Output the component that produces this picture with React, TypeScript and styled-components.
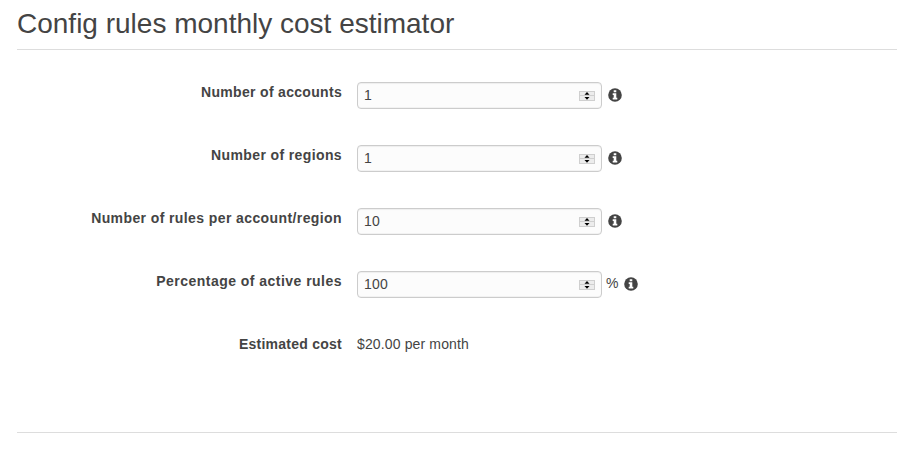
import React from "react";
import styled, { createGlobalStyle } from "styled-components";

const GlobalStyle = createGlobalStyle`
  body { margin: 0; background: #fff; color: #444; font-family: "Liberation Sans", Arial, sans-serif; font-size: 14px; overflow: hidden; }
`;
const Page = styled.main`
  box-sizing: border-box;
  height: 465px;
  padding-left: 17px;
`;
const Panel = styled.section`
  box-sizing: border-box;
  height: 433px;
  border-bottom: 1px solid #ddd;
`;
const Title = styled.h1`
  box-sizing: border-box;
  height: 50px;
  margin: 0 0 32px;
  padding-top: 7px;
  border-bottom: 1px solid #ddd;
  font-size: 28px;
  line-height: 33px;
  font-weight: 400;
  white-space: nowrap;
`;
const Form = styled.div`
  display: grid;
  grid-auto-rows: 27px;
  row-gap: 36px;
`;
const Row = styled.div`
  display: grid;
  grid-template-columns: 325px auto;
  column-gap: 15px;
`;
const Label = styled.label<{ $tracking: number }>`
  text-align: right;
  font-weight: 700;
  line-height: 20px;
  letter-spacing: ${(p) => p.$tracking}px;
`;
const Control = styled.div`
  display: flex;
  align-items: flex-start;
`;
const Field = styled.div`
  box-sizing: border-box;
  display: flex;
  align-items: center;
  justify-content: space-between;
  width: 245px;
  height: 27px;
  padding: 0 6px;
  border: 1px solid #ccc;
  border-radius: 4px;
  background: #fcfcfc;
  box-shadow: inset 0 1px 1px rgba(0, 0, 0, 0.06), inset 0 -1px 0 rgba(0, 0, 0, 0.04);
`;
const Value = styled.span`
  padding-bottom: 2px;
  letter-spacing: 0.2px;
`;
const Unit = styled.span`
  margin-left: 4px;
  line-height: 24px;
`;
const Info = styled.svg`
  margin: 6px 0 0 6px;
  flex: none;
`;
const Result = styled.span`
  line-height: 20px;
  letter-spacing: 0.14px;
`;

const Spinner = () => (
  <svg width="16" height="11" viewBox="0 0 16 11">
    <rect x="0.5" y="1.5" width="15" height="4" fill="#ececec" stroke="#cfcfcf" />
    <rect x="0.5" y="5.5" width="15" height="5" fill="#ececec" stroke="#cfcfcf" />
    <path d="M5.5 4.8 8 2 10.5 4.8ZM5.5 7 8 9.8 10.5 7Z" fill="#000" />
  </svg>
);
const InfoIcon = () => (
  <Info width="14" height="14" viewBox="0 0 14 14">
    <circle cx="7" cy="7" r="6.8" fill="#444" />
    <path d="M5.7 2.3h2.6v2H5.7zM4.7 5.3h3.6v4.5h1v1.7H4.7V9.8h1V7h-1z" fill="#fff" />
  </Info>
);

const fields = [
  { label: "Number of accounts", value: "1", tracking: 0.31 },
  { label: "Number of regions", value: "1", tracking: 0.38 },
  { label: "Number of rules per account/region", value: "10", tracking: 0.4 },
  { label: "Percentage of active rules", value: "100", unit: "%", tracking: 0.47 },
];

export default function App() {
  return (
    <Page>
      <GlobalStyle />
      <Panel>
        <Title>Config rules monthly cost estimator</Title>
        <Form>
          {fields.map((f) => (
            <Row key={f.label}>
              <Label $tracking={f.tracking}>{f.label}</Label>
              <Control>
                <Field><Value>{f.value}</Value><Spinner /></Field>
                {f.unit && <Unit>{f.unit}</Unit>}
                <InfoIcon />
              </Control>
            </Row>
          ))}
          <Row>
            <Label $tracking={0.25}>Estimated cost</Label>
            <Result>$20.00 per month</Result>
          </Row>
        </Form>
      </Panel>
    </Page>
  );
}
